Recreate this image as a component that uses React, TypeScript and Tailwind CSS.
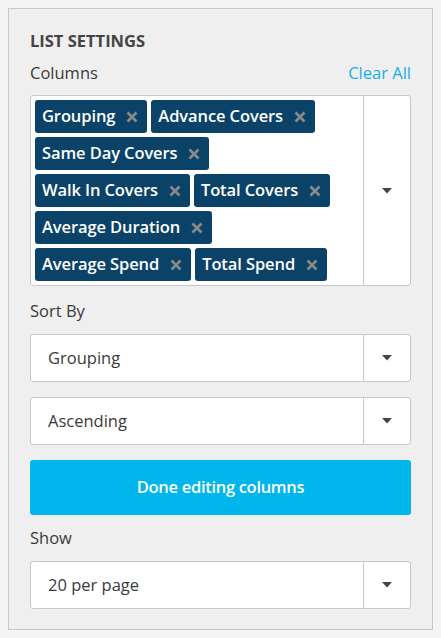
import React from 'react';

const tags = [
  'Grouping',
  'Advance Covers',
  'Same Day Covers',
  'Walk In Covers',
  'Total Covers',
  'Average Duration',
  'Average Spend',
  'Total Spend',
];

const Caret: React.FC = () => (
  <svg width="10" height="6" viewBox="0 0 10 6">
    <path d="M0 0 L10 0 L5 5.5 Z" fill="#444" />
  </svg>
);

const Select: React.FC<{ value: string }> = ({ value }) => (
  <div className="flex h-[48px] bg-white border border-[#c8c8c8] rounded-[3px]">
    <div className="flex-1 flex items-center pl-[17px] text-[16.5px] text-[#3a3a3a]">{value}</div>
    <div className="w-[47px] flex items-center justify-center border-l border-[#c8c8c8]">
      <Caret />
    </div>
  </div>
);

export default function App() {
  return (
    <div
      className="min-h-[638px] bg-[#f4f4f4] p-2"
      style={{ fontFamily: '"Open Sans", "Liberation Sans", sans-serif' }}
    >
      <div className="w-[425px] bg-[#efefef] border border-[#c8c8c8] px-[21px] pt-[21px] pb-[20px]">
        <h2 className="text-[16.5px] font-bold text-[#444] leading-[22px]">LIST SETTINGS</h2>

        <div className="flex items-center justify-between mt-[10px] leading-[22px]">
          <span className="text-[16.5px] text-[#3a3a3a]">Columns</span>
          <button className="text-[16.5px] text-[#1aaee8]">Clear All</button>
        </div>

        {/* Columns multi-select */}
        <div className="flex mt-[11px] bg-white border border-[#c8c8c8] rounded-[3px]">
          <div className="flex-1 flex flex-wrap gap-x-[4px] gap-y-[4px] p-[4px]">
            {tags.map((t) => (
              <span
                key={t}
                className="flex items-center h-[33px] pl-[7px] pr-[9px] bg-[#0b4268] rounded-[3px] text-white text-[16.5px] font-semibold tracking-[-0.1px]"
              >
                {t}
                <svg width="12" height="12" viewBox="0 0 12 12" className="ml-[11px]">
                  <path d="M1.5 1.5 L10.5 10.5 M10.5 1.5 L1.5 10.5" stroke="#8a8a8a" strokeWidth="2.6" />
                </svg>
              </span>
            ))}
          </div>
          <div className="w-[47px] flex items-center justify-center border-l border-[#c8c8c8]">
            <Caret />
          </div>
        </div>

        <div className="mt-[14px] text-[16.5px] text-[#3a3a3a] leading-[22px]">Sort By</div>
        <div className="mt-[12px] flex flex-col gap-[15px]">
          <Select value="Grouping" />
          <Select value="Ascending" />
        </div>

        <button className="mt-[15px] w-full h-[55px] rounded-[3px] bg-[#00b6ed] text-white text-[16.5px] font-semibold tracking-[-0.3px]">
          Done editing columns
        </button>

        <div className="mt-[12px] text-[16.5px] text-[#3a3a3a] leading-[22px]">Show</div>
        <div className="mt-[12px]">
          <Select value="20 per page" />
        </div>
      </div>
    </div>
  );
}
